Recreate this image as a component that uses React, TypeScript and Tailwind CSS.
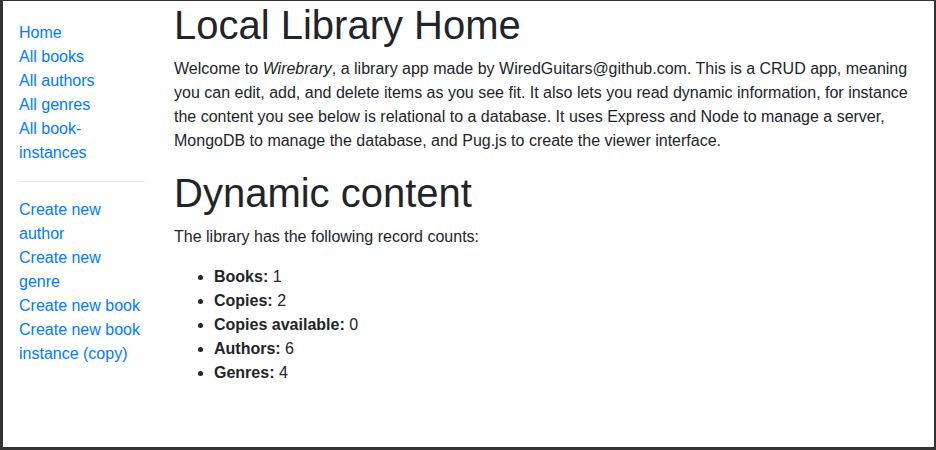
import React from 'react'

const browseLinks = ['Home', 'All books', 'All authors', 'All genres', 'All book-instances']
const createLinks = ['Create new author', 'Create new genre', 'Create new book', 'Create new book instance (copy)']

const counts: { label: string, value: number }[] = [
  { label: 'Books:', value: 1 },
  { label: 'Copies:', value: 2 },
  { label: 'Copies available:', value: 0 },
  { label: 'Authors:', value: 6 },
  { label: 'Genres:', value: 4 },
]

const App = () => {
  return (
    <div className="w-[936px] h-[450px] box-border border-[#333] border-t border-l-[3px] border-r-2 border-b-[3px] bg-white text-[#212529] text-base leading-6 font-['Liberation_Sans',Arial,sans-serif] overflow-hidden">
      <div className="flex pl-4 pr-[10px]">
        {/* Sidebar */}
        <div className="w-[126px] shrink-0">
          <ul className="mt-5 list-none p-0">
            {browseLinks.map((l) => (
              <li key={l}><a href="#" className="text-[#007bff]">{l}</a></li>
            ))}
          </ul>
          <hr className="my-4 border-0 border-t border-[#e6e6e6]" />
          <ul className="list-none p-0">
            {createLinks.map((l) => (
              <li key={l}><a href="#" className="text-[#007bff]">{l}</a></li>
            ))}
          </ul>
        </div>

        {/* Main */}
        <div className="flex-1 ml-[29px]">
          <h1 className="text-[40px] leading-[48px] mb-2">Local Library Home</h1>
          <p className="mb-4">
            Welcome to <em>Wirebrary</em>, a library app made by WiredGuitars@github.com. This is a CRUD app, meaning you can edit, add, and delete items as you see fit. It also lets you read dynamic information, for instance the content you see below is relational to a database. It uses Express and Node to manage a server, MongoDB to manage the database, and Pug.js to create the viewer interface.
          </p>
          <h1 className="text-[40px] leading-[48px] mb-2">Dynamic content</h1>
          <p className="mb-4">The library has the following record counts:</p>
          <ul className="list-disc pl-10">
            {counts.map((c) => (
              <li key={c.label}><strong className="font-bold">{c.label}</strong> {c.value}</li>
            ))}
          </ul>
        </div>
      </div>
    </div>
  )
}

export default App
